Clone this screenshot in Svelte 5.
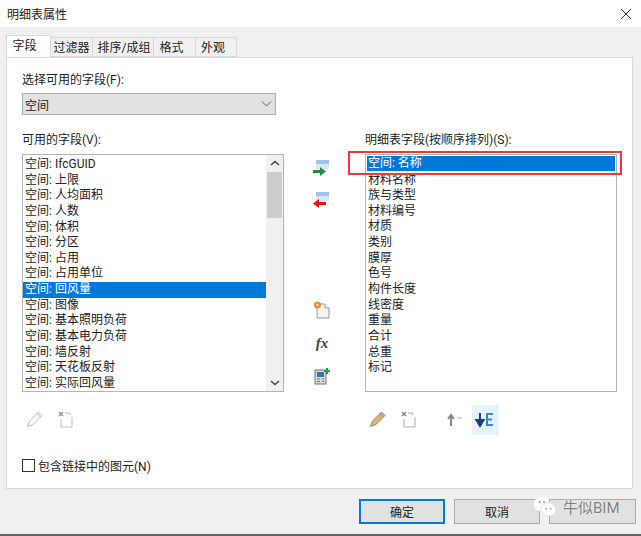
<script lang="ts">
  const tabs = ['字段', '过滤器', '排序/成组', '格式', '外观'];
  const available = [
    'IfcGUID', '上限', '人均面积', '人数', '体积', '分区', '占用', '占用单位', '回风量',
    '图像', '基本照明负荷', '基本电力负荷', '墙反射', '天花板反射', '实际回风量'
  ].map((n) => `空间: ${n}`);
  const scheduled = [
    '材料名称', '族与类型', '材料编号', '材质', '类别', '膜厚', '色号', '构件长度',
    '线密度', '重量', '合计', '总重', '标记'
  ];
</script>

<div class="dialog">
  <header class="title">
    <span>明细表属性</span>
    <svg class="close" width="12" height="12" viewBox="0 0 12 12"><path d="M1 1l10 10M11 1L1 11" stroke="#333" fill="none" /></svg>
  </header>
  <div class="body">
    <div class="tabs">
      {#each tabs as tab, i}
        <div class="tab t{i}" class:active={i === 0}>{tab}</div>
      {/each}
    </div>
    <div class="panel">
      <label class="pick-label" for="pick">选择可用的字段(F):</label>
      <div class="select" id="pick">
        <span>空间</span>
        <svg width="11" height="6" viewBox="0 0 11 6"><path d="M1 .5l4.500 4.500L10 .5" stroke="#666" fill="none" /></svg>
      </div>
      <div class="columns">
        <section class="left">
          <div class="col-label">可用的字段(V):</div>
          <div class="list avail">
            <div class="rows">
              {#each available as item, i}
                <div class="row" class:sel={i === 8}>{item}</div>
              {/each}
            </div>
            <div class="scroll">
              <svg width="10" height="6" viewBox="0 0 10 6"><path d="M1 5l4-3.500L9 5" stroke="#444" stroke-width="1.500" fill="none" /></svg>
              <div class="thumb"></div>
              <div class="track"></div>
              <svg width="10" height="6" viewBox="0 0 10 6"><path d="M1 1l4 3.500L9 1" stroke="#444" stroke-width="1.500" fill="none" /></svg>
            </div>
          </div>
          <div class="tools">
            <svg width="18" height="18" viewBox="0 0 18 18"><path d="M1.500 16.500l2-5.500 9-9 3.500 3.500-9 9z" fill="#fafafa" stroke="#bbb" /><path d="M11 3.500l3.500 3.500" stroke="#bbb" /></svg>
            <svg width="18" height="18" viewBox="0 0 18 18"><path d="M1 2l4 4M5 2L1 6" stroke="#999" stroke-width="1.500" /><path d="M7 3h4l1 1v1M14 7v10H3V9" stroke="#bbb" fill="none" /></svg>
          </div>
        </section>

        <div class="mid">
          <div class="move">
            <svg width="16" height="17" viewBox="0 0 16 17"><rect x="3" y="0" width="13" height="4" fill="#9cc3ee" /><rect x="3" y="4" width="13" height="5" fill="#dce6f2" /><path d="M0 11.500h8" stroke="#2e8b3d" stroke-width="3" /><path d="M7 7l6 4.500L7 16z" fill="#2e8b3d" /></svg>
            <svg width="16" height="17" viewBox="0 0 16 17"><rect x="3" y="0" width="13" height="4" fill="#9cc3ee" /><rect x="3" y="4" width="13" height="5" fill="#dce6f2" /><path d="M13 11.500H5" stroke="#e81010" stroke-width="3" /><path d="M6 7L0 11.500 6 16z" fill="#e81010" /></svg>
          </div>
          <div class="extra">
            <svg width="18" height="18" viewBox="0 0 18 18"><path d="M4 3h8l4 4v10H4z" fill="#f4f4f4" stroke="#999" /><path d="M12 3v4h4" fill="#fff" stroke="#999" /><circle cx="4.500" cy="4" r="3.500" fill="#ee8a2a" /><circle cx="4.500" cy="4" r="1.200" fill="#fbe3c6" /></svg>
            <span class="fx">fx</span>
            <svg width="18" height="18" viewBox="0 0 18 18"><rect x="2" y="3" width="11" height="14" fill="#d8d8d8" stroke="#777" /><rect x="4" y="5" width="7" height="5" fill="#3a70b5" /><path d="M4 12h3M9 12h2M4 14.500h3M9 14.500h2" stroke="#777" /><path d="M14 1v6M11 4h6" stroke="#1aa531" stroke-width="2" /></svg>
          </div>
        </div>

        <section class="right">
          <div class="col-label">明细表字段(按顺序排列)(S):</div>
          <div class="list sched">
            <div class="rows">
              <div class="row first">空间: 名称</div>
              {#each scheduled as item}
                <div class="row">{item}</div>
              {/each}
            </div>
          </div>
          <div class="hilite"></div>
          <div class="tools">
            <svg width="18" height="18" viewBox="0 0 18 18"><path d="M1.500 16.500l2-5.500 9-9 3.500 3.500-9 9z" fill="#d9b676" stroke="#888" /><path d="M11 3.500l3.500 3.500" stroke="#888" /></svg>
            <svg width="18" height="18" viewBox="0 0 18 18"><path d="M1 2l4 4M5 2L1 6" stroke="#888" stroke-width="1.500" /><path d="M7 3h4l1 1v1M14 7v10H3V9" stroke="#aaa" fill="none" /></svg>
            <svg class="up" width="18" height="18" viewBox="0 0 18 18"><path d="M5 16V6M2 9l3-4 3 4" stroke="#888" stroke-width="2" fill="none" /><path d="M11 8h5" stroke="#bbb" /></svg>
            <div class="down">
              <svg width="20" height="18" viewBox="0 0 20 18"><path d="M5 2v11M1.500 9L5 15l3.500-6z" stroke="#1c3f78" stroke-width="2" fill="#1c3f78" /><path d="M18 3h-6v11h6M12 8.500h5" stroke="#3f86c9" stroke-width="2" fill="none" /></svg>
            </div>
          </div>
        </section>
      </div>
      <label class="check"><span class="box"></span>包含链接中的图元(N)</label>
    </div>
    <footer class="buttons">
      <button class="ok">确定</button>
      <button>取消</button>
      <button class="blank"></button>
    </footer>
  </div>
  <div class="mark">
    <svg width="25" height="21" viewBox="0 0 34 28"><ellipse cx="12" cy="11" rx="11" ry="10" fill="#fff" /><ellipse cx="21" cy="18" rx="10" ry="9" fill="#fff" stroke="#ddd" /><circle cx="9" cy="8" r="1.500" fill="#aaa" /><circle cx="15" cy="8" r="1.500" fill="#aaa" /><circle cx="18" cy="17" r="1.300" fill="#aaa" /><circle cx="24" cy="17" r="1.300" fill="#aaa" /></svg>
    <span>牛似BIM</span>
  </div>
</div>

<style>
  :global(body) {
    margin: 0;
    background: #f0f0f0;
  }
  .dialog {
    position: relative;
    width: 641px;
    height: 536px;
    overflow: hidden;
    font-family: Roboto, 'Noto Sans CJK SC', sans-serif;
    font-size: 12px;
    color: #222;
    background: #f0f0f0;
    border-bottom: 2px solid #666;
    box-sizing: border-box;
  }
  .title {
    height: 27px;
    display: flex;
    align-items: center;
    justify-content: space-between;
    padding: 0 9px 0 7px;
    background: #fff;
  }
  .body {
    padding: 9px 8px 0 6px;
  }
  .tabs {
    display: flex;
    align-items: flex-end;
    height: 21px;
    position: relative;
    z-index: 1;
  }
  .tab {
    height: 20px;
    line-height: 20px;
    box-sizing: border-box;
    text-align: center;
    background: #f0f0f0;
    border: 1px solid #d9d9d9;
    border-left: 0;
  }
  .t0 { width: 45px; padding-right: 8px; }
  .t1 { width: 42px; }
  .t2 { width: 61px; padding-left: 2px; }
  .t3 { width: 42px; padding-right: 6px; }
  .t4 { width: 41px; padding-right: 6px; }
  .tab.active {
    height: 22px;
    background: #fff;
    border: 1px solid #d9d9d9;
    border-bottom: 0;
  }
  .panel {
    height: 432px;
    box-sizing: border-box;
    background: #fff;
    border: 1px solid #d9d9d9;
    padding: 14px 15px 0;
  }
  .pick-label, .col-label {
    display: block;
    line-height: 16px;
  }
  .select {
    margin-top: 5px;
    width: 254px;
    height: 22px;
    box-sizing: border-box;
    display: flex;
    align-items: center;
    justify-content: space-between;
    padding: 0 3px 0 2px;
    background: #e1e1e1;
    border: 1px solid #adadad;
  }
  .columns {
    display: flex;
    margin-top: 17px;
  }
  .left { width: 263px; }
  .right { width: 253px; position: relative; }
  .mid {
    width: 81px;
    display: flex;
    flex-direction: column;
    align-items: flex-start;
    padding: 28px 0 0 29px;
    box-sizing: border-box;
  }
  .move {
    display: flex;
    flex-direction: column;
    gap: 15px;
    margin-bottom: 92px;
  }
  .extra {
    display: flex;
    flex-direction: column;
    align-items: center;
    gap: 15px;
  }
  .fx {
    font-family: 'Liberation Serif', serif;
    font-style: italic;
    font-weight: 700;
    font-size: 15px;
    line-height: 18px;
    color: #444;
  }
  .list {
    margin-top: 6px;
    height: 238px;
    box-sizing: border-box;
    border: 1px solid #b4b4b4;
    background: #fff;
    display: flex;
    overflow: hidden;
  }
  .rows {
    flex: 1;
    min-width: 0;
  }
  .avail .rows {
    padding-top: 2px;
  }
  .row {
    height: 15.650px;
    line-height: 15.650px;
    padding-left: 2px;
    white-space: nowrap;
  }
  .row.sel, .row.first {
    background: #0078d7;
    color: #fff;
  }
  .row.first {
    margin: 1px 1px 1.500px 1px;
    height: 15px;
    line-height: 15px;
    padding-left: 1px;
  }
  .scroll {
    width: 17px;
    background: #f0f0f0;
    display: flex;
    flex-direction: column;
    align-items: center;
  }
  .scroll svg {
    margin: 5px 0;
  }
  .thumb {
    width: 15px;
    height: 46px;
    background: #cdcdcd;
    margin-top: 1px;
  }
  .track { flex: 1; }
  .hilite {
    position: absolute;
    left: -17px;
    top: 19px;
    width: 270px;
    height: 20px;
    border: 2px solid #f03a3a;
    background: transparent;
  }
  .tools {
    display: flex;
    align-items: center;
    gap: 14px;
    margin-top: 16px;
    padding-left: 4px;
    height: 22px;
  }
  .tools .up { margin-left: 13px; }
  .down {
    width: 27px;
    height: 30px;
    margin-left: -6px;
    margin-top: 2px;
    display: flex;
    align-items: center;
    justify-content: center;
    background: #e5f1fb;
    flex: none;
  }
  .check {
    display: flex;
    align-items: center;
    gap: 3px;
    margin-top: 27px;
  }
  .box {
    width: 11px;
    height: 11px;
    border: 1px solid #333;
    background: #fff;
  }
  .buttons {
    display: flex;
    justify-content: flex-end;
    gap: 9px;
    margin: 10px -3px 0 0;
  }
  button {
    width: 86px;
    height: 25px;
    padding: 0;
    font: inherit;
    color: #222;
    background: #e1e1e1;
    border: 1px solid #adadad;
  }
  button.blank {
    width: 87px;
  }
  button.ok {
    border: 2px solid #0078d7;
  }
  .mark {
    position: absolute;
    left: 533px;
    top: 496px;
    display: flex;
    align-items: center;
    gap: 5px;
    color: #808080;
    font-size: 15px;
    text-shadow: 0 0 2px #fff;
  }
</style>
